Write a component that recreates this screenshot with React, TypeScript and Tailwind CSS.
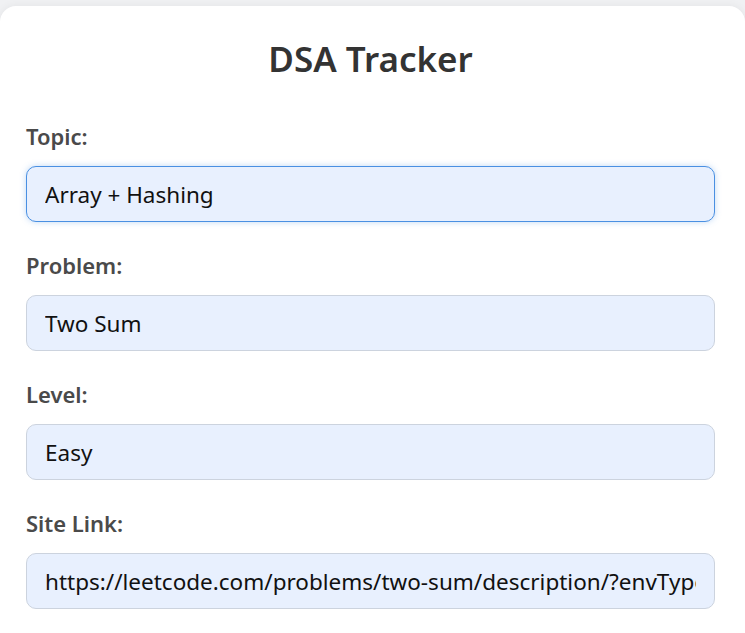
import React from "react";

const fields = [
  { id: "topic", label: "Topic:", value: "Array + Hashing", focused: true },
  { id: "problem", label: "Problem:", value: "Two Sum" },
  { id: "level", label: "Level:", value: "Easy" },
  {
    id: "link",
    label: "Site Link:",
    value: "https://leetcode.com/problems/two-sum/description/?envType=problem-list-v2",
  },
];

export default function App() {
  return (
    <div
      className="min-h-screen bg-[#f0f1f3] pt-[6px]"
      style={{ fontFamily: '"Noto Sans", "Open Sans", sans-serif' }}
    >
      <div className="rounded-[16px] bg-white pl-[26px] pr-[30px] pt-[29px] pb-16 shadow-[0_0_10px_rgba(0,0,0,0.06)]">
        <h1 className="text-center text-[35px] font-semibold leading-[48px] text-[#333]">
          DSA Tracker
        </h1>

        <form className="mt-[38px]">
          {fields.map((f) => (
            <div key={f.id} className="mb-[28px]">
              <label
                htmlFor={f.id}
                className="block text-[22px] font-semibold leading-[30px] text-[#4a4a4a]"
              >
                {f.label}
              </label>
              <input
                id={f.id}
                type="text"
                defaultValue={f.value}
                className={`mt-[15px] block h-[56px] w-full rounded-[10px] border bg-[#e8f0fe] px-[18px] text-[22.5px] text-[#111] outline-none ${
                  f.focused
                    ? "border-[#4a90e2] shadow-[0_0_6px_rgba(74,144,226,0.35)]"
                    : "border-[#ccd3de]"
                }`}
              />
            </div>
          ))}
        </form>
      </div>
    </div>
  );
}
